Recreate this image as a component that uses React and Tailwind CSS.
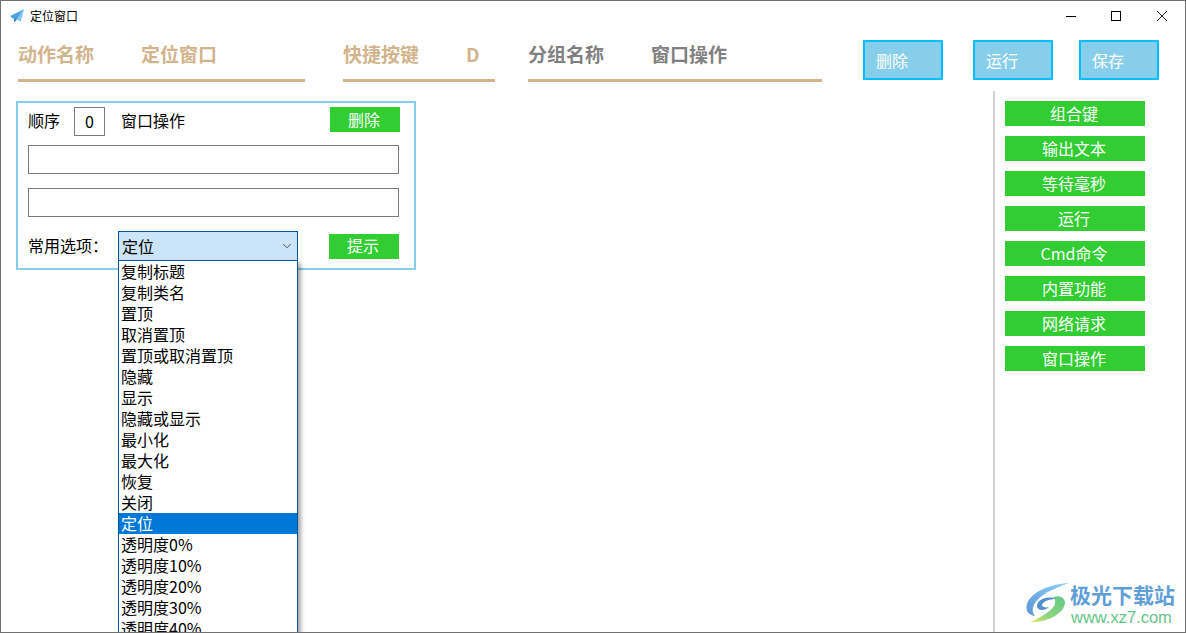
import React from 'react'
import { ChevronDown } from 'lucide-react'

const options = ['复制标题', '复制类名', '置顶', '取消置顶', '置顶或取消置顶', '隐藏', '显示', '隐藏或显示', '最小化', '最大化', '恢复', '关闭', '定位', '透明度0%', '透明度10%', '透明度20%', '透明度30%', '透明度40%']
const sideButtons = ['组合键', '输出文本', '等待毫秒', '运行', 'Cmd命令', '内置功能', '网络请求', '窗口操作']

const HeaderField = ({ label, value, width, dark }) => (
  <div className={`flex flex-col ${width}`}>
    <div className={`flex h-[48px] items-center pb-[2px] text-[19px] font-bold ${dark ? 'text-[#808080]' : 'text-[#d2b48c]'}`}>
      <span className="w-[123px]">{label}</span>
      <span>{value}</span>
    </div>
    <div className="h-[3px] bg-[#d2b48c]" />
  </div>
)

const ActionButton = ({ label, className }) => (
  <button className={`h-[40px] w-[80px] border-2 border-[#00bfff] bg-[#87ceeb] pb-[1px] pl-[11px] text-left text-[16px] text-white ${className}`}>
    {label}
  </button>
)

const GreenButton = ({ label, className }) => (
  <button className={`bg-[#32cd32] pb-[2px] pr-[2px] text-[16px] leading-none text-white ${className}`}>{label}</button>
)

const App = () => {
  return (
    <div className="relative flex h-[633px] w-[1186px] flex-col overflow-hidden border border-[#6f6f6f] bg-white font-['Noto_Sans_CJK_SC','Noto_Sans',sans-serif] text-black">

      {/* Title bar */}
      <div className="flex h-[30px] shrink-0 items-center">
        <svg viewBox="0 0 14 14" className="ml-[9px] h-[14px] w-[14px]">
          <path d="M14 0.3 L0 7 L4 10.3 Z" fill="#4ba3e3" />
          <path d="M14 0.3 L4 10.3 L4.3 13.5 L6.5 11 Z" fill="#2f7fc4" />
          <path d="M14 0.3 L6 10 L10.7 12.7 Z" fill="#7cc8f7" />
        </svg>
        <span className="ml-[6px] text-[12px] leading-none">定位窗口</span>
        <div className="ml-auto flex items-center pr-[18px]">
          <div className="mr-[35px] h-px w-[10px] bg-black" />
          <div className="mr-[36px] h-[10px] w-[10px] border border-black" />
          <svg viewBox="0 0 10 10" className="h-[10px] w-[10px]">
            <path d="M0 0 L10 10 M10 0 L0 10" stroke="#000" strokeWidth="0.9" />
          </svg>
        </div>
      </div>

      {/* Header fields */}
      <div className="flex h-[60px] shrink-0 items-start pl-[17px]">
        <HeaderField label="动作名称" value="定位窗口" width="w-[287px]" />
        <HeaderField label="快捷按键" value="D" width="ml-[38px] w-[152px]" />
        <HeaderField label="分组名称" value="窗口操作" width="ml-[33px] w-[294px]" dark />
        <div className="ml-[41px] flex pt-[9px]">
          <ActionButton label="删除" />
          <ActionButton label="运行" className="ml-[30px]" />
          <ActionButton label="保存" className="ml-[26px]" />
        </div>
      </div>

      {/* Body */}
      <div className="flex min-h-0 flex-1">
        <div className="flex-1 pl-[15px] pt-[10px]">
          <div className="flex h-[169px] w-[400px] flex-col border-2 border-[#87ceeb] pl-[10px] pr-[15px] pt-[4px]">
            <div className="flex items-start text-[16px]">
              <span className="h-[29px] leading-[27px]">顺序</span>
              <span className="ml-[14px] flex h-[29px] w-[31px] items-center justify-center border border-[#7a7a7a] pb-[2px]">0</span>
              <span className="ml-[16px] h-[29px] leading-[27px]">窗口操作</span>
              <GreenButton label="删除" className="ml-auto mr-[-1px] h-[25px] w-[70px]" />
            </div>
            <div className="mt-[9px] h-[29px] w-[371px] border border-[#7a7a7a]" />
            <div className="mt-[14px] h-[29px] w-[371px] border border-[#7a7a7a]" />
            <div className="mt-[14px] flex items-center">
              <span className="w-[90px] pb-[2px] text-[16px]">常用选项：</span>
              <div className="relative h-[30px] w-[180px]">
                <div className="flex h-full items-center justify-between border border-[#005499] bg-[#cce4f7] pl-[3px] pr-[3px] text-[16px]">
                  <span>定位</span>
                  <ChevronDown size={14} strokeWidth={1.4} className="text-[#333]" />
                </div>

                {/* Open dropdown list */}
                <div className="absolute left-0 top-[29px] z-10 h-[390px] w-[180px] overflow-hidden border border-[#005499] bg-white shadow-[3px_3px_4px_rgba(0,0,0,0.35)]">
                  {options.map((item) => (
                    <div
                      key={item}
                      className={`flex h-[21px] items-center pb-[2px] pl-[2px] text-[16px] leading-none ${item === '定位' ? 'bg-[#0078d7] text-white' : ''}`}
                    >
                      {item}
                    </div>
                  ))}
                </div>
              </div>
              <GreenButton label="提示" className="ml-[31px] h-[25px] w-[70px]" />
            </div>
          </div>
        </div>

        {/* Side buttons */}
        <div className="w-[192px] shrink-0">
          <div className="flex h-full flex-col gap-[10px] border-l-2 border-[#d3d3d3] pl-[10px] pt-[10px]">
            {sideButtons.map((item) => (
              <GreenButton key={item} label={item} className="h-[25px] w-[140px]" />
            ))}
          </div>
        </div>
      </div>

      {/* Watermark */}
      <div className="absolute bottom-[4px] right-[10px] flex items-center">
        <svg viewBox="0 0 44 40" className="mb-[5px] h-[40px] w-[44px]">
          <defs>
            <linearGradient id="wmBlue" x1="1" y1="0" x2="0" y2="1">
              <stop offset="0" stopColor="#8fd4f7" />
              <stop offset="1" stopColor="#5b93d6" />
            </linearGradient>
            <linearGradient id="wmGreen" x1="1" y1="0" x2="0" y2="1">
              <stop offset="0" stopColor="#63c98a" />
              <stop offset="0.65" stopColor="#8fd67c" />
              <stop offset="1" stopColor="#e6e86a" />
            </linearGradient>
          </defs>
          <path d="M43 0 C24 1 5 9 1 21 C-1 28 3 32 9 33 C4 28 7 18 20 10 C27 6 35 3 43 0 Z" fill="url(#wmBlue)" />
          <path d="M4 39 C20 40 38 31 39 20 C39 14 33 12 27 14 C31 17 30 24 22 29 C16 33 10 37 4 39 Z" fill="url(#wmGreen)" />
          <path d="M30 16 C21 12 11 17 11 23 C11 28 19 28 23 24 C19 25 16 24 16 22 C17 18 24 16 30 16 Z" fill="#4f8fcf" />
        </svg>
        <div className="flex flex-col items-start">
          <span className="text-[21px] font-bold leading-[24px] text-[#5f9fd8]">极光下载站</span>
          <span className="pl-[1px] font-['Liberation_Sans',sans-serif] text-[16.5px] leading-[22px] text-[#66c48a]">www.xz7.com</span>
        </div>
      </div>
    </div>
  )
}

export default App
